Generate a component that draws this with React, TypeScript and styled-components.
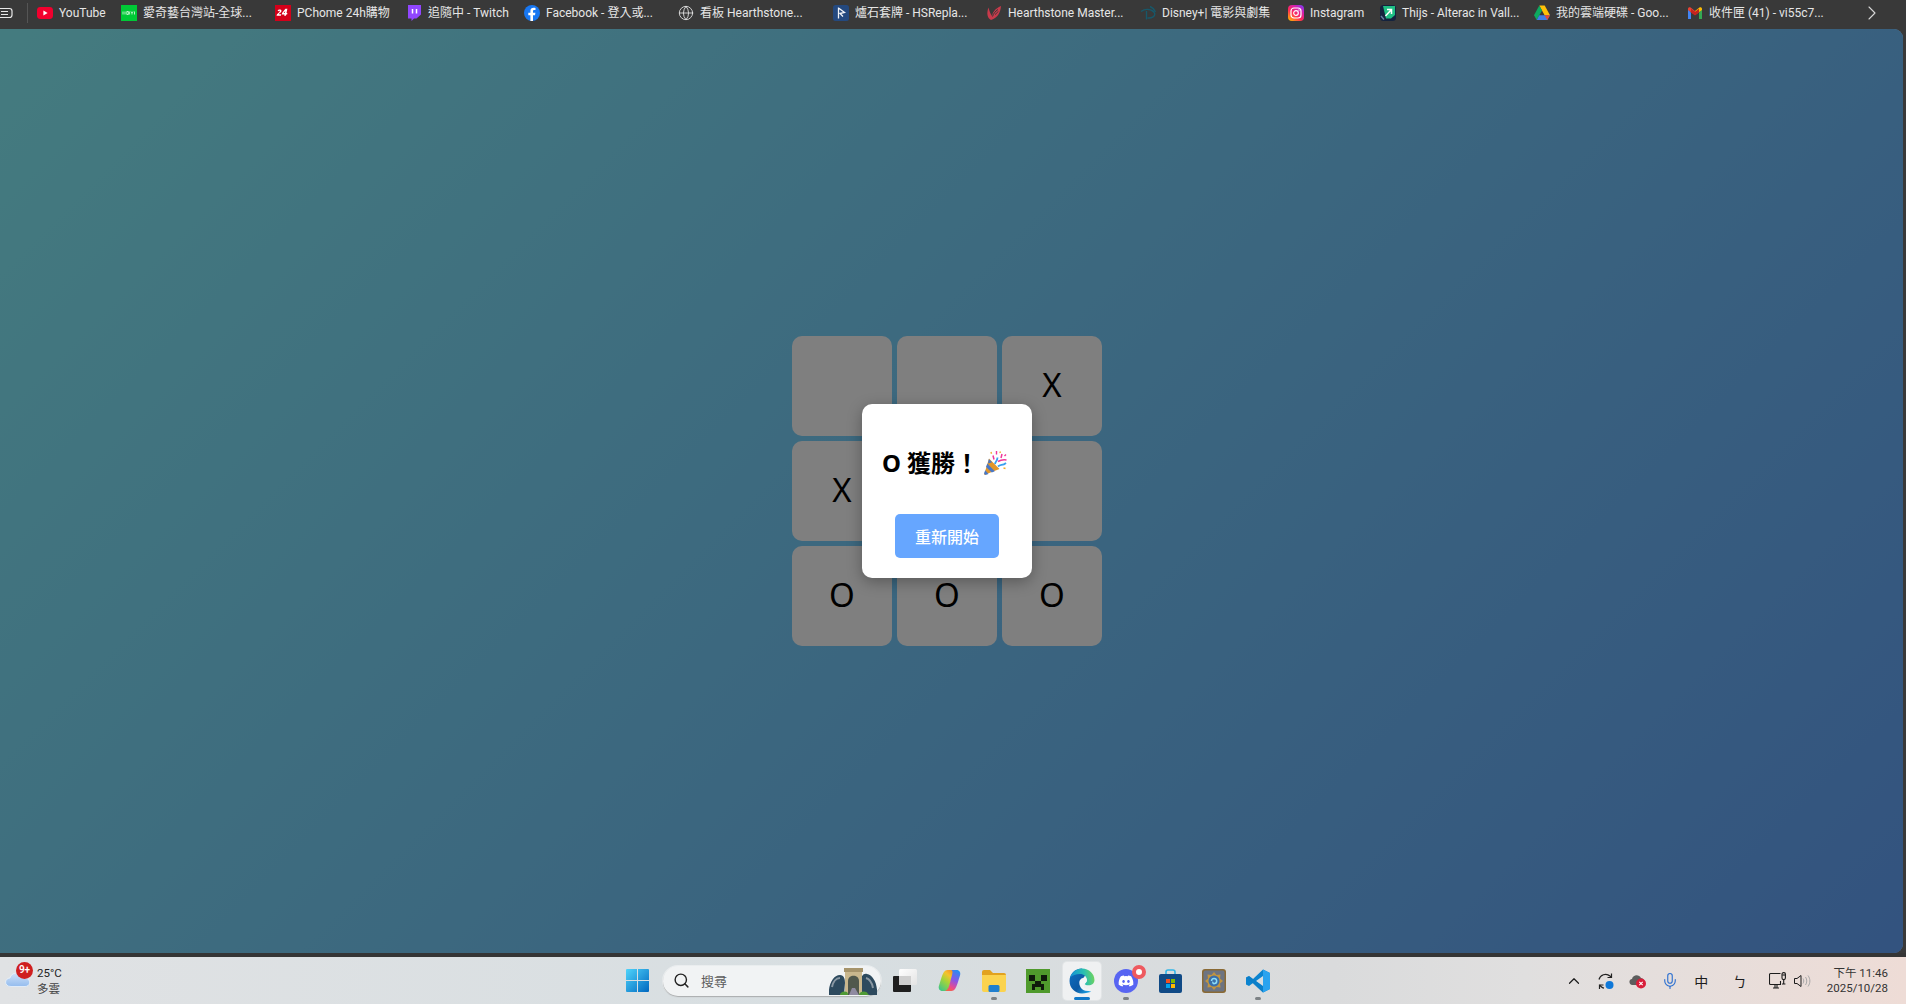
import React from "react";
import styled, { createGlobalStyle } from "styled-components";
import { ChevronRight, ChevronUp, Globe, Mic, Search } from "lucide-react";
import { FaDiscord } from "react-icons/fa";

const UI_FONT = `Roboto, "Noto Sans CJK TC", "Noto Sans", sans-serif`;

const GlobalStyle = createGlobalStyle`
  html, body, #root { margin: 0; padding: 0; height: 100%; }
  body { overflow: hidden; font-family: ${UI_FONT}; background: #393939; }
  * { box-sizing: border-box; }
`;

const Shell = styled.div`
  height: 100vh;
  display: flex;
  flex-direction: column;
  background: #393939;
`;

const BookmarkBar = styled.nav`
  flex: none;
  height: 29px;
  padding-bottom: 3px;
  display: flex;
  align-items: center;
  color: #e6e6e6;
  font-size: 12px;
  white-space: nowrap;
`;

const BarLead = styled.div`
  width: 37px;
  flex: none;
  height: 21px;
  display: flex;
  align-items: center;
`;

const BarLeadDivider = styled.span`
  width: 1px;
  height: 20px;
  margin-left: 14px;
  background: #555;
`;

const Bookmark = styled.div<{ $width: number }>`
  flex: none;
  width: ${(p) => p.$width}px;
  display: flex;
  align-items: center;
  gap: 6px;
  overflow: hidden;
`;

const BookmarkIcon = styled.span`
  flex: none;
  width: 16px;
  height: 16px;
  display: block;
  svg { display: block; width: 16px; height: 16px; }
`;

const BookmarkLabel = styled.span`
  display: block;
  height: 16px;
  line-height: 16px;
`;

const BarMore = styled.div`
  margin-left: auto;
  margin-right: 22px;
  display: flex;
  color: #d8d8d8;
`;

const Page = styled.main`
  flex: 1;
  min-height: 0;
  position: relative;
  margin-right: 3px;
  padding-right: 9px;
  border-radius: 0 9px 9px 0;
  overflow: hidden;
  display: flex;
  align-items: center;
  justify-content: center;
  background: linear-gradient(135deg, #89f7fe, #66a6ff);
`;

const Board = styled.div`
  display: grid;
  grid-template-columns: repeat(3, 100px);
  grid-template-rows: repeat(3, 100px);
  gap: 5px;
`;

const Cell = styled.div`
  background: #fff;
  border-radius: 10px;
  padding-bottom: 3px;
  display: flex;
  align-items: center;
  justify-content: center;
  color: #000;
  font-family: "Noto Sans", sans-serif;
  font-size: 33px;
`;

const Overlay = styled.div`
  position: absolute;
  inset: 0;
  padding-right: 9px;
  background: rgba(0, 0, 0, 0.5);
  display: flex;
  align-items: center;
  justify-content: center;
`;

const Modal = styled.div`
  width: 170px;
  height: 174px;
  padding: 41px 0 20px;
  background: #fff;
  border-radius: 10px;
  box-shadow: 0 4px 15px rgba(0, 0, 0, 0.3);
  display: flex;
  flex-direction: column;
  align-items: center;
`;

const Heading = styled.h2`
  margin: 0 5px 0 0;
  height: 36px;
  display: flex;
  align-items: center;
  color: #000;
  font-family: "Noto Sans", "Noto Sans CJK TC", sans-serif;
  font-size: 24px;
  font-weight: 700;
  line-height: 36px;
  white-space: pre;
  svg { flex: none; width: 24px; height: 24px; margin-left: 4px; }
`;

const RestartButton = styled.button`
  margin-top: auto;
  width: 104px;
  height: 44px;
  border: 0;
  border-radius: 5px;
  background: #66a6ff;
  color: #fff;
  font-family: "Noto Sans CJK TC", sans-serif;
  font-size: 16px;
  font-weight: 500;
`;

const Band = styled.div`
  flex: none;
  height: 4px;
  background: #353535;
`;

const Taskbar = styled.footer`
  flex: none;
  height: 47px;
  display: flex;
  align-items: center;
  background: linear-gradient(90deg, #e0e2e4 0%, #d7dee1 45%, #dadbdc 70%, #e0dfdf 80%, #eedcd6 100%);
  color: #1c1c1c;
`;

const Weather = styled.div`
  flex: none;
  width: 615px;
  height: 47px;
  position: relative;
  padding: 8px 0 0 37px;
  font-size: 11.5px;
  line-height: 16px;
  color: #222;
`;

const WeatherIcon = styled.span`
  position: absolute;
  left: 5px;
  top: 11px;
  svg { display: block; width: 26px; height: 20px; }
`;

const WeatherBadge = styled.span`
  position: absolute;
  left: 16px;
  top: 5px;
  width: 17px;
  height: 17px;
  border-radius: 50%;
  background: #cf1f1f;
  color: #fff;
  font-size: 10px;
  font-weight: 600;
  line-height: 16px;
  text-align: center;
`;

const WeatherCondition = styled.div`
  color: #444;
`;

const Slot = styled.div<{ $width?: number }>`
  flex: none;
  width: ${(p) => p.$width ?? 44}px;
  height: 38px;
  position: relative;
  display: flex;
  align-items: center;
  justify-content: center;
  svg { display: block; }
`;

const ActiveSlot = styled(Slot)`
  background: rgba(255, 255, 255, 0.6);
  border-radius: 4px;
  box-shadow: 0 0 0 1px rgba(255, 255, 255, 0.25);
  margin: 0 3px;
  width: 38px;
`;

const RunningDot = styled.span<{ $active?: boolean }>`
  position: absolute;
  bottom: 0;
  left: 50%;
  transform: translateX(-50%);
  width: ${(p) => (p.$active ? 16 : 6)}px;
  height: 3px;
  border-radius: 2px;
  background: ${(p) => (p.$active ? "#0f78c8" : "#7d8285")};
`;

const NotifyDot = styled.span`
  position: absolute;
  top: 3px;
  right: 2px;
  width: 14px;
  height: 14px;
  border-radius: 50%;
  border: 4px solid #ee5a5f;
  background: #fff;
`;

const SearchBox = styled.div`
  flex: none;
  width: 218px;
  height: 30px;
  margin: 0 3px 0 4px;
  padding: 0 4px 0 10px;
  display: flex;
  align-items: center;
  border-radius: 15px;
  background: #f1f3f4;
  box-shadow: 0 1px 1px rgba(0, 0, 0, 0.28), 0 0 0 1px rgba(255, 255, 255, 0.45);
  color: #5c5c5c;
  font-size: 13px;
  svg { display: block; flex: none; }
`;

const SearchLabel = styled.span`
  margin-left: 11px;
  flex: 1;
`;

const Tray = styled.div`
  margin-left: auto;
  display: flex;
  align-items: center;
  padding-right: 18px;
`;

const TrayItem = styled.div<{ $width: number }>`
  flex: none;
  width: ${(p) => p.$width}px;
  height: 30px;
  position: relative;
  display: flex;
  align-items: center;
  justify-content: center;
  font-size: 14px;
  color: #1c1c1c;
  font-family: "Noto Sans CJK TC", sans-serif;
  svg { display: block; }
`;

const Clock = styled.div`
  margin-left: 14px;
  text-align: right;
  font-size: 11.5px;
  line-height: 15px;
  color: #333;
`;

/* ---------- drawn icons ---------- */

const LeadIcon = () => (
  <svg width="13" height="12" viewBox="0 0 13 12" fill="none" stroke="#e8e8e8" strokeWidth="1.2">
    <rect x="-4" y="1.5" width="16" height="9" rx="2.5" />
    <path d="M1 4.5h7M1 7.5h7" />
  </svg>
);

const YouTube = () => (
  <svg viewBox="0 0 16 16"><rect y="2" width="16" height="12" rx="3.4" fill="#f2002e" /><path d="M6.4 5.6 10.6 8l-4.2 2.4z" fill="#fff" /></svg>
);
const Iqiyi = () => (
  <svg viewBox="0 0 16 16"><rect width="16" height="16" fill="#00c936" /><path d="M2 6.5v3M4 6.5v3M5.8 6.5h1.6v3H5.8zM8.6 6.5v3M10 6.5l1 1.5 1-1.5M11 8v1.5M13.5 6.5v3" stroke="#fff" strokeWidth=".7" fill="none" /></svg>
);
const PChome = () => (
  <svg viewBox="0 0 16 16"><rect width="16" height="16" fill="#d4001a" /><path d="M2.6 5.8c.5-1.6 4-1.8 3.9.3-.1 1.5-2 2-2.7 3.1h2.4l-.3 1.6H1.6c.1-2.400 3.100-3.100 3.200-4.500 0-.7-.9-.6-1.100 0zM10.400 3.800h2l-.9 4.300h.9l-.3 1.300h-.9l-.3 1.400h-1.700l.3-1.400H6.800l.3-1.400zM9.800 8.100l.5-2.200-1.700 2.200z" fill="#fff" /></svg>
);
const Twitch = () => (
  <svg viewBox="0 0 16 16"><path d="M2 0H15V9.500L10.500 13.500H8L5.500 16V13.500H2z" fill="#9146ff" /><path d="M6.500 4v4.500M10.500 4v4.500" stroke="#fff" strokeWidth="1.500" /></svg>
);
const Facebook = () => (
  <svg viewBox="0 0 16 16"><circle cx="8" cy="8" r="8" fill="#1877f2" /><path d="M9 16V10.200h2l.4-2.400H9V6.300c0-.7.300-1.200 1.300-1.200h1.200V3c-.5-.1-1.200-.2-1.900-.2-2 0-3.200 1.200-3.200 3.200v1.800H4.300v2.400h2.100V16z" fill="#fff" /></svg>
);
const HSReplay = () => (
  <svg viewBox="0 0 16 16"><rect width="16" height="16" rx="2.500" fill="#24497f" /><path d="M5.500 2.500v11M5.500 3 11.500 7.500 7 8.500l3 3" stroke="#f2f4f8" strokeWidth="1.300" fill="none" /></svg>
);
const HSMaster = () => (
  <svg viewBox="0 0 16 16"><path d="M5 15C1 13 .5 8 2.500 2.500 3.500 6 4 8 6 11 6.500 7.500 9 3.500 15 1c-.5 6-3 12-10 14z" fill="#c93a4b" /><path d="M6.500 11.500C7.500 8.500 9 6.500 12 4.500M9 9.500c1-.5 2-1.500 3-3" stroke="#393939" strokeWidth="1" fill="none" /></svg>
);
const Disney = () => (
  <svg viewBox="0 0 16 16" fill="none" stroke="#17586a" strokeWidth="1.400"><path d="M1 6.500C5 3.500 12 3.500 14.500 8c1.200 3-2.500 5.500-7 5" /><path d="M6.500 6v8.500" /><path d="M10 1.500c2.500 1 4.500 3 5.500 5.500" /></svg>
);
const Instagram = () => (
  <svg viewBox="0 0 16 16">
    <defs>
      <linearGradient id="igGrad" x1="0.1" y1="1" x2="0.9" y2="0">
        <stop offset="0" stopColor="#ffb800" />
        <stop offset="0.4" stopColor="#ff2a55" />
        <stop offset="0.75" stopColor="#d21fb4" />
        <stop offset="1" stopColor="#7a3cf0" />
      </linearGradient>
    </defs>
    <rect width="16" height="16" rx="4" fill="url(#igGrad)" />
    <rect x="3" y="3" width="10" height="10" rx="3" fill="none" stroke="#fff" strokeWidth="1.200" />
    <circle cx="8" cy="8" r="2.300" fill="none" stroke="#fff" strokeWidth="1.200" />
    <circle cx="11" cy="5" r=".7" fill="#fff" />
  </svg>
);
const Thijs = () => (
  <svg viewBox="0 0 16 16"><rect width="16" height="16" rx="3.500" fill="#14233e" /><path d="M3 1h12v9l-4 3.500H6z" fill="#1fbf83" /><path d="M7 4.500h4.500V9M11.300 4.700 5.500 11" stroke="#fff" strokeWidth="1.500" fill="none" /><path d="M1 11l3 3.500" stroke="#6a7da0" strokeWidth="1.400" /></svg>
);
const Drive = () => (
  <svg viewBox="0 0 16 15">
    <path d="M5.300 0h5.400l5.300 9.700h-5.400z" fill="#ffc107" />
    <path d="M5.300 0 0 9.700l2.700 4.700L8 4.900z" fill="#0da960" />
    <path d="M5.300 9.700H16l-2.700 4.700H2.700z" fill="#3f7ee8" />
    <path d="M13.300 14.400 16 9.700h-5.400z" fill="#e64a35" />
  </svg>
);
const Gmail = () => (
  <svg viewBox="0 0 16 16">
    <path d="M1 4.500v9.500h3V7.500z" fill="#4285f4" />
    <path d="M12 7.500V14h3V4.500z" fill="#34a853" />
    <path d="M1 3.800C1 2.400 2.600 1.800 3.600 2.600L8 6l-.1 4L1 5z" fill="#ea4335" />
    <path d="M15 3.800c0-1.400-1.600-2-2.600-1.200L8 6v4l7-5z" fill="#fbbc04" />
    <path d="M4 7.500V3.800L8 6.800l4-3V7.500L8 10.500z" fill="#c5221f" />
  </svg>
);

const Party = () => (
  <svg viewBox="0 0 24 24" role="img" aria-label="🎉">
    <path d="M6 7.500 16.500 18 1 24z" fill="#e2962a" />
    <path d="M4.300 12.500 11.800 20.300l-3 1.200-5.800-5.600zM5.800 8l3.400 3.200-4.200 1.200zM2.200 19.300 5.500 23l-3 1-1.500-1.500z" fill="#4a78c4" />
    <path d="M12 13c.5-3 2.500-3 2.500-6.500M15 15.500c2.500-2.500 4.500-.5 8-3.500" stroke="#3aa0f0" strokeWidth="1.800" fill="none" />
    <path d="M10 4.500 11 8.500M19 3l-1 4M15 10.500c2.500-1.500 5-2 8.500-1.500" stroke="#f0379a" strokeWidth="1.500" fill="none" />
    <path d="M8 1l.5 1.800M20.500 17l2 .5M17 .5l.3 1.500" stroke="#f0b030" strokeWidth="1.400" />
    <path d="M13.500 0v3.500M21.500 5l1.500-1.500" stroke="#f0379a" strokeWidth="1.400" />
  </svg>
);

const Cloud = () => (
  <svg viewBox="0 0 26 20">
    <defs>
      <linearGradient id="cloudGrad" x1="0" y1="0" x2="0" y2="1">
        <stop offset="0" stopColor="#cfe1f8" />
        <stop offset="1" stopColor="#94bcee" />
      </linearGradient>
    </defs>
    <path d="M6 18.500c-7 0-7-8-1-8.500C6.500 4 14 3.500 16.500 9c1-.5 2 0 2.500 1 7-.5 7.500 8.500 1 8.500z" fill="url(#cloudGrad)" stroke="#eaf2fb" strokeWidth=".8" />
  </svg>
);

const WinLogo = () => (
  <svg width="23" height="23" viewBox="0 0 23 23">
    <defs>
      <linearGradient id="winGrad" x1="0" y1="0" x2="1" y2="1">
        <stop offset="0" stopColor="#4fd4fb" />
        <stop offset="1" stopColor="#0067bf" />
      </linearGradient>
    </defs>
    <path d="M1 0h10v11H0V1a1 1 0 0 1 1-1zM12 0h10a1 1 0 0 1 1 1v10H12zM0 12h11v11H1a1 1 0 0 1-1-1zM12 12h11v10a1 1 0 0 1-1 1H12z" fill="url(#winGrad)" />
  </svg>
);

const Castle = () => (
  <svg width="48" height="32" viewBox="0 0 48 32">
    <path d="M0 30C-1 20 4 10 11 10c4 0 5 4 5 8l-1 12zM33 30l-1-14c0-4 2-8 6-7 6 1 11 10 10 21z" fill="#2d4a5e" />
    <path d="M3 22c1-5 4-9 8-9M37 13c4 1 6 5 7 10" stroke="#8a98a3" strokeWidth="2" fill="none" />
    <path d="M16 5h17v25H16z" fill="#c9b78d" />
    <path d="M15 3h19v4H15z" fill="#a6946b" />
    <path d="M19 30V16c0-7 11-7 11 0v14z" fill="#50584c" />
    <path d="M20 30l3-7h3l4 7z" fill="#8f8aa0" />
    <path d="M11 30c0-4 8-5 8-1v1zM30 30c0-4 8-5 9-1l1 1z" fill="#4f9a35" />
  </svg>
);

const TaskView = () => (
  <svg width="24" height="24" viewBox="0 0 24 24">
    <defs>
      <linearGradient id="tvGrad" x1="0" y1="0" x2="1" y2="1">
        <stop offset="0" stopColor="#ffffff" />
        <stop offset="1" stopColor="#e3e3e3" />
      </linearGradient>
    </defs>
    <rect x="0" y="7" width="18" height="16" rx="1" fill="#1f1f1f" />
    <rect x="6" y="0" width="18" height="16" rx="1.500" fill="url(#tvGrad)" />
    <rect x="6" y="7" width="12" height="9" fill="#cfcfcf" />
  </svg>
);

const Copilot = () => (
  <svg width="23" height="23" viewBox="0 0 23 23">
    <defs>
      <linearGradient id="cpA" x1="0.1" y1="1" x2="0.7" y2="0">
        <stop offset="0" stopColor="#38c48c" />
        <stop offset="0.5" stopColor="#a4d43a" />
        <stop offset="0.8" stopColor="#f5c32c" />
        <stop offset="1" stopColor="#f59a2c" />
      </linearGradient>
      <linearGradient id="cpB" x1="0.7" y1="0" x2="0.3" y2="1">
        <stop offset="0" stopColor="#2a8cf0" />
        <stop offset="0.45" stopColor="#8a55e6" />
        <stop offset="0.8" stopColor="#ea4c8c" />
        <stop offset="1" stopColor="#f2644a" />
      </linearGradient>
    </defs>
    <path d="M9.500 1H16L10 22H4.500C1.500 22 0 19.500 1 16.500L3.500 8.500C5 4 6.500 1 9.500 1z" fill="url(#cpA)" />
    <path d="M14 1h4.500c3 0 4.500 2.500 3.500 5.500L19.500 14.500C18 19 16.500 22 13.500 22H7c2.500-.8 3.700-3.500 4.500-6.500L14 6c.5-2 1-4-.5-5z" fill="url(#cpB)" />
  </svg>
);

const Explorer = () => (
  <svg width="24" height="22" viewBox="0 0 24 22">
    <path d="M0 2a2 2 0 0 1 2-2h6l3 3h11a2 2 0 0 1 2 2v3H0z" fill="#e2a21f" />
    <path d="M0 5h24v15a2 2 0 0 1-2 2H2a2 2 0 0 1-2-2z" fill="#fbd34e" />
    <rect x="6.500" y="15" width="11" height="7" rx="1.500" fill="#1f7fcf" />
  </svg>
);

const Creeper = () => (
  <svg width="24" height="24" viewBox="0 0 8 8" shapeRendering="crispEdges">
    <rect width="8" height="8" fill="#4f9a2c" />
    <path d="M1 2h2v2H1zM5 2h2v2H5zM3 4h2v1H3zM2 5h4v2H5V6H3v1H2z" fill="#0e1a0b" />
  </svg>
);

const Edge = () => (
  <svg width="26" height="26" viewBox="0 0 24 24">
    <defs>
      <linearGradient id="edgeBody" x1="0" y1="0.2" x2="0.8" y2="1">
        <stop offset="0" stopColor="#0f6cbd" />
        <stop offset="0.6" stopColor="#0c59a4" />
        <stop offset="1" stopColor="#1a9ee0" />
      </linearGradient>
      <linearGradient id="edgeTop" x1="0" y1="0.5" x2="1" y2="0.4">
        <stop offset="0" stopColor="#1391d8" />
        <stop offset="0.6" stopColor="#2bc0b0" />
        <stop offset="1" stopColor="#72d45a" />
      </linearGradient>
    </defs>
    <path d="M.5 12C.5 5.500 5.500.5 12 .5l3 6-4 7 4.500 7 5 1.500C18.500 22.500 15.500 23.500 12 23.500 5.500 23.500.5 18.500.5 12z" fill="url(#edgeBody)" />
    <path d="M1 9C2.500 4 7 .5 12 .5c6.500 0 11.500 5 11.500 10.500 0 3-2.500 5-5.500 5-2.500 0-3.500-1-3.500-1.500 1.500-1 2-2 2-3.500 0-3-2.500-5.500-6.500-5.500C6.500 5.500 3 6.500 1 9z" fill="url(#edgeTop)" />
    <path d="M9.500 13.500C9.500 11 11.500 9 14 9c1.800 0 2.500 1 2.500 2 0 1.500-1 2.500-2 3.500-1.500 1.500-.5 4 2 5 1 .4 2.800.3 4 0-1 1-2 1.500-4 1.500-4 0-7-3.500-7-7.500z" fill="#f3f6f8" />
  </svg>
);

const Discord = () => (
  <svg width="24" height="24" viewBox="0 0 24 24">
    <circle cx="12" cy="12" r="12" fill="#5865f2" />
    <FaDiscord x="4" y="4" width="16" height="16" color="#fff" />
  </svg>
);

const Store = () => (
  <svg width="23" height="24" viewBox="0 0 23 24">
    <path d="M7 7V3a2 2 0 0 1 2-2h5a2 2 0 0 1 2 2v4" fill="none" stroke="#32b6e8" strokeWidth="1.600" />
    <path d="M0 7a2 2 0 0 1 2-2h19a2 2 0 0 1 2 2v15a2 2 0 0 1-2 2H2a2 2 0 0 1-2-2z" fill="#104a86" />
    <rect x="7" y="10" width="4" height="4" fill="#f25022" />
    <rect x="12" y="10" width="4" height="4" fill="#7fba00" />
    <rect x="7" y="15" width="4" height="4" fill="#00a4ef" />
    <rect x="12" y="15" width="4" height="4" fill="#ffb900" />
  </svg>
);

const Hearthstone = () => (
  <svg width="24" height="24" viewBox="0 0 24 24">
    <rect width="24" height="24" rx="3" fill="#8a6a35" />
    <rect x="1.500" y="1.500" width="21" height="21" rx="2" fill="#6d7482" />
    <path d="M12 3l2.500 3 4-.5-.5 4 3 2.500-3 2.500.5 4-4-.5-2.500 3-2.500-3-4 .5.5-4-3-2.500 3-2.500-.5-4 4 .5z" fill="#c2953f" />
    <circle cx="12" cy="12" r="5.500" fill="#3a6ea8" />
    <path d="M9.500 12a2.600 2.600 0 1 1 3 2.600c-1.500.2-2-1-1.300-1.800" fill="none" stroke="#8bdcf7" strokeWidth="1.500" />
  </svg>
);

const VSCode = () => (
  <svg width="24" height="24" viewBox="0 0 24 24">
    <path d="M17 0.500 24 4v16l-7 3.500L7 14l-4 3-3-1.500v-7L3 7l4 3z" fill="#0b84d0" />
    <path d="M17 0.500 24 4v16l-7 3.500z" fill="#2aa3ef" />
    <path d="M17 7 10 12l7 5z" fill="#d8dde0" />
    <path d="M0 8.500 3 7l14 10.500v6z" fill="#0b7cc4" opacity=".6" />
  </svg>
);

const Sync = () => (
  <svg width="18" height="18" viewBox="0 0 18 18" fill="none" stroke="#222" strokeWidth="1.200">
    <path d="M2 7.500C3 3 9 .5 13 4l1.500 1.500" />
    <path d="M14.500 1.500v4h-4" />
    <path d="M2.500 17v-4h4" />
    <path d="M2.500 13l1.500 1.500c1 1 2 1.500 3 1.700" />
    <circle cx="12.500" cy="13" r="4" fill="#0f78d8" stroke="none" />
  </svg>
);

const CloudError = () => (
  <svg width="18" height="16" viewBox="0 0 18 16">
    <path d="M3.500 12C-.5 12-.5 6 3 6c1-4.500 7-5 9-1 3 .5 4 3.500 3 5l-4 2z" fill="#5d5d5d" />
    <circle cx="12" cy="10.500" r="5" fill="#d81e3a" />
    <path d="M10.300 8.800l3.400 3.400M13.700 8.800l-3.400 3.400" stroke="#fff" strokeWidth="1.100" />
  </svg>
);

const NetworkIcon = () => (
  <svg width="17" height="17" viewBox="0 0 17 17" fill="none" stroke="#1c1c1c" strokeWidth="1.100">
    <path d="M11.500 1.500H1.500a1 1 0 0 0-1 1v9a1 1 0 0 0 1 1h10V9" />
    <path d="M4 16h6M6 13v3M8 13v3" />
    <rect x="13" y=".6" width="3.400" height="7" rx="1.500" />
    <path d="M14.700 7.600v4M13 12h3.400" />
    <path d="M13.200 3h3" />
  </svg>
);

const Speaker = () => (
  <svg width="17" height="16" viewBox="0 0 17 16" fill="none" stroke="#1c1c1c" strokeWidth="1">
    <path d="M.5 5.500h2.500L7 2.500v11L3 10.500H.5z" />
    <path d="M9 5.500c1 1.500 1 3.500 0 5M11.500 4c1.700 2.500 1.700 5.500 0 8M14 2.500c2.500 3.500 2.500 7.500 0 11" stroke="#a8a8a8" />
  </svg>
);

const bookmarks: { width: number; icon: React.ReactNode; label: string }[] = [
  { width: 84, icon: <YouTube />, label: "YouTube" },
  { width: 154, icon: <Iqiyi />, label: "愛奇藝台灣站-全球..." },
  { width: 131, icon: <PChome />, label: "PChome 24h購物" },
  { width: 118, icon: <Twitch />, label: "追隨中 - Twitch" },
  { width: 154, icon: <Facebook />, label: "Facebook - 登入或..." },
  { width: 155, icon: <Globe size={16} strokeWidth={1.3} color="#e6e6e6" />, label: "看板 Hearthstone..." },
  { width: 153, icon: <HSReplay />, label: "爐石套牌 - HSRepla..." },
  { width: 154, icon: <HSMaster />, label: "Hearthstone Master..." },
  { width: 148, icon: <Disney />, label: "Disney+| 電影與劇集" },
  { width: 92, icon: <Instagram />, label: "Instagram" },
  { width: 154, icon: <Thijs />, label: "Thijs - Alterac in Vall..." },
  { width: 153, icon: <Drive />, label: "我的雲端硬碟 - Goo..." },
  { width: 145, icon: <Gmail />, label: "收件匣 (41) - vi55c7..." },
];

const cells = ["", "", "X", "X", "", "", "O", "O", "O"];

export default function App() {
  return (
    <Shell>
      <GlobalStyle />
      <BookmarkBar>
        <BarLead>
          <LeadIcon />
          <BarLeadDivider />
        </BarLead>
        {bookmarks.map((b) => (
          <Bookmark key={b.label} $width={b.width}>
            <BookmarkIcon>{b.icon}</BookmarkIcon>
            <BookmarkLabel>{b.label}</BookmarkLabel>
          </Bookmark>
        ))}
        <BarMore>
          <ChevronRight size={24} strokeWidth={1.1} />
        </BarMore>
      </BookmarkBar>

      <Page>
        <Board>
          {cells.map((c, i) => (
            <Cell key={i}>{c}</Cell>
          ))}
        </Board>
        <Overlay>
          <Modal>
            <Heading>
              O 獲勝！
              <Party />
            </Heading>
            <RestartButton>重新開始</RestartButton>
          </Modal>
        </Overlay>
      </Page>

      <Band />

      <Taskbar>
        <Weather>
          <WeatherIcon>
            <Cloud />
          </WeatherIcon>
          <WeatherBadge>9+</WeatherBadge>
          <div>25°C</div>
          <WeatherCondition>多雲</WeatherCondition>
        </Weather>

        <Slot>
          <WinLogo />
        </Slot>
        <SearchBox>
          <Search size={17} strokeWidth={2} color="#222" />
          <SearchLabel>搜尋</SearchLabel>
          <Castle />
        </SearchBox>
        <Slot $width={42}>
          <TaskView />
        </Slot>
        <Slot $width={46}>
          <Copilot />
        </Slot>
        <Slot>
          <Explorer />
          <RunningDot />
        </Slot>
        <Slot>
          <Creeper />
        </Slot>
        <ActiveSlot>
          <Edge />
          <RunningDot $active />
        </ActiveSlot>
        <Slot>
          <Discord />
          <NotifyDot />
          <RunningDot />
        </Slot>
        <Slot>
          <Store />
        </Slot>
        <Slot>
          <Hearthstone />
        </Slot>
        <Slot>
          <VSCode />
          <RunningDot />
        </Slot>

        <Tray>
          <TrayItem $width={32}>
            <ChevronUp size={18} strokeWidth={1.6} />
          </TrayItem>
          <TrayItem $width={32}>
            <Sync />
          </TrayItem>
          <TrayItem $width={32}>
            <CloudError />
          </TrayItem>
          <TrayItem $width={32}>
            <Mic size={18} strokeWidth={1.5} color="#2b6fd0" />
          </TrayItem>
          <TrayItem $width={31}>中</TrayItem>
          <TrayItem $width={46}>ㄅ</TrayItem>
          <TrayItem $width={30}>
            <NetworkIcon />
          </TrayItem>
          <TrayItem $width={20}>
            <Speaker />
          </TrayItem>
          <Clock>
            <div>下午 11:46</div>
            <div>2025/10/28</div>
          </Clock>
        </Tray>
      </Taskbar>
    </Shell>
  );
}
